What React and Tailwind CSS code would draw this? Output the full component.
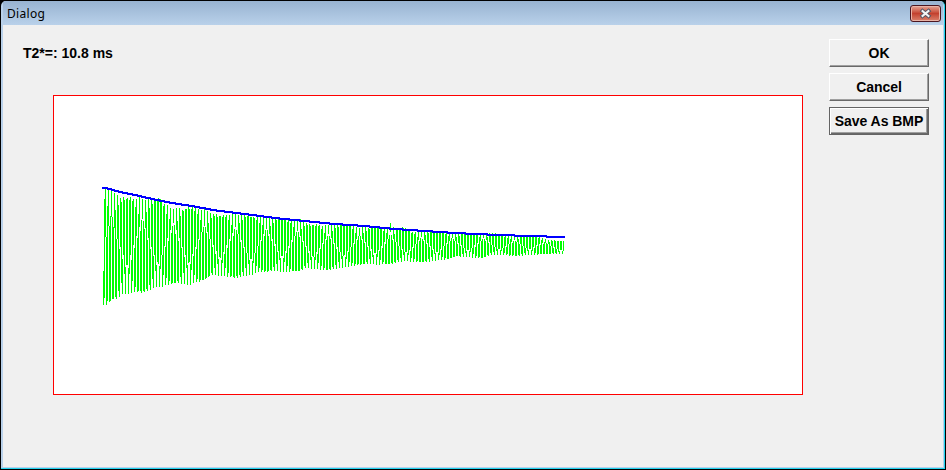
import React from "react";

const TOP = [[103,190],[105,187],[108,189],[114,193],[117,195],[120,197],[130,197],[140,197],[150,198],[160,198],[165,204],[171,207],[184,208],[194,206],[205,209],[213,213],[221,216],[225,214],[235,213],[245,213],[252,217],[260,216],[270,217],[280,218],[292,218],[300,219],[310,224],[325,225],[333,224],[345,224],[351,224],[357,227],[380,227],[388,227],[390,223],[392,227],[405,227],[410,232],[425,230],[445,231],[455,233],[495,233],[505,236],[535,235],[545,239],[564,241]];
const BOTTOM = [[103,305],[106,305],[109,302],[112,299],[116,299],[119,297],[122,294],[148,293],[155,289],[160,289],[166,285],[178,283],[190,286],[200,283],[207,279],[213,276],[224,276],[230,278],[238,278],[252,276],[258,273],[275,271],[285,273],[300,272],[305,269],[325,270],[337,269],[347,268],[355,266],[365,264],[385,265],[405,262],[425,262],[447,260],[455,257],[482,258],[490,255],[512,256],[535,255],[564,254]];
const DECAY = [[102,188],[106,188],[120,192],[135,195],[148,198],[162,201],[178,204],[192,206],[213,210],[245,214],[275,218],[305,221],[335,224],[365,226],[395,229],[425,231],[455,233],[476,234],[500,235],[530,236],[564,237]];

function at(points, x) {
  for (let i = 1; i < points.length; i++) {
    if (x <= points[i][0]) {
      const [x0, y0] = points[i - 1];
      const [x1, y1] = points[i];
      return y0 + ((y1 - y0) * (x - x0)) / (x1 - x0);
    }
  }
  return points[points.length - 1][1];
}

// Each pixel column spans the range the oscillation covers inside it.
function signalPath() {
  let d = "";
  for (let x = 103; x < 564; x++) {
    const top = at(TOP, x);
    const bottom = at(BOTTOM, x);
    let lo = 1, hi = -1;
    for (let k = 0; k <= 20; k++) {
      const v = Math.cos((2 * Math.PI * (x + k / 20 - 105.3)) / 3.1);
      lo = Math.min(lo, v);
      hi = Math.max(hi, v);
    }
    // Measurement noise, growing once the first periods have passed.
    const noise = x < 120 ? 0 : 0.025;
    hi -= noise * (1 + Math.sin(x * 2.7));
    lo += noise * (1 + Math.sin(x * 1.9));
    const mid = (top + bottom) / 2;
    const amp = (bottom - top) / 2;
    const y0 = Math.round(mid - amp * hi);
    const y1 = x === 103 ? 305 : Math.round(mid - amp * lo);
    d += `M${x} ${x === 103 ? 271 : y0}h1V${y1}h-1z`;
  }
  return d;
}

function decayPath() {
  let d = "";
  for (let x = 102; x < 565; x++) {
    const y = Math.round(at(DECAY, x)) - 1;
    const next = Math.round(at(DECAY, x + 1)) - 1;
    d += `M${x} ${y}h1v${next > y ? 3 : 2}h-1z`;
  }
  return d;
}

function Button({ children, focused }) {
  return (
    <button
      className={
        "flex h-7 w-[100px] items-center justify-center whitespace-nowrap border bg-[#f0f0f0] pb-px text-[14px] font-bold leading-none tracking-[-0.05px] " +
        (focused
          ? "border-[#646464] shadow-[inset_1px_1px_0_#ffffff,inset_-1px_-1px_0_#696969,inset_-2px_-2px_0_#a0a0a0]"
          : "border-t-white border-l-white border-r-[#696969] border-b-[#696969] shadow-[inset_-1px_-1px_0_#a0a0a0]")
      }
    >
      {children}
    </button>
  );
}

export default function App() {
  return (
    <div className="h-[470px] w-[946px] overflow-hidden bg-black p-px font-['Liberation_Sans',Arial,sans-serif] text-black">
      <div className="flex h-[468px] w-[944px] flex-col overflow-hidden rounded-t-[5px] border-r border-b border-[#22d3ee] bg-[#b9d1ea] pr-px pb-px pl-[2px]">
        <header className="flex h-6 shrink-0 items-start justify-between bg-linear-to-b from-[#98b3d1] to-[#b9d1ea] pl-1">
          <span className="pt-[4px] font-['Noto_Sans',sans-serif] text-[12px] leading-[18px] tracking-[0.3px]">Dialog</span>
          <button aria-label="Close" className="mt-[4px] mr-[2px] flex h-[17px] w-[31px] items-center justify-center rounded-[3px] border border-[#4b1620] bg-linear-to-b from-[#e5a596] from-0% via-[#c3402e] via-50% to-[#d9806c] shadow-[inset_0_0_0_1px_#e9b3a6]">
            <svg width="13" height="11" viewBox="0 0 13 11" fill="none">
              <path d="M3.5 3L9.5 8M9.5 3L3.5 8" stroke="#535666" strokeWidth="4" strokeLinecap="square" />
              <path d="M3.5 3L9.5 8M9.5 3L3.5 8" stroke="#f4f4f4" strokeWidth="2" strokeLinecap="square" />
            </svg>
          </button>
        </header>
        <main className="flex min-h-0 flex-1 items-start bg-[#f0f0f0]">
          <section className="w-[826px] pl-5">
            <p className="pt-5 text-[14px] font-bold leading-4">T2*=: 10.8 ms</p>
            <div className="mt-[34px] ml-[30px] h-[300px] w-[750px] border border-[#ff0000] bg-white">
              <svg width="748" height="298" viewBox="54 96 748 298" shapeRendering="crispEdges">
                <path d={signalPath()} fill="#00ff00" />
                <path d={decayPath()} fill="#0000ff" />
              </svg>
            </div>
          </section>
          <aside className="flex flex-col gap-[6px] pt-[14px]">
            <Button>OK</Button>
            <Button>Cancel</Button>
            <Button focused>Save As BMP</Button>
          </aside>
        </main>
      </div>
    </div>
  );
}
